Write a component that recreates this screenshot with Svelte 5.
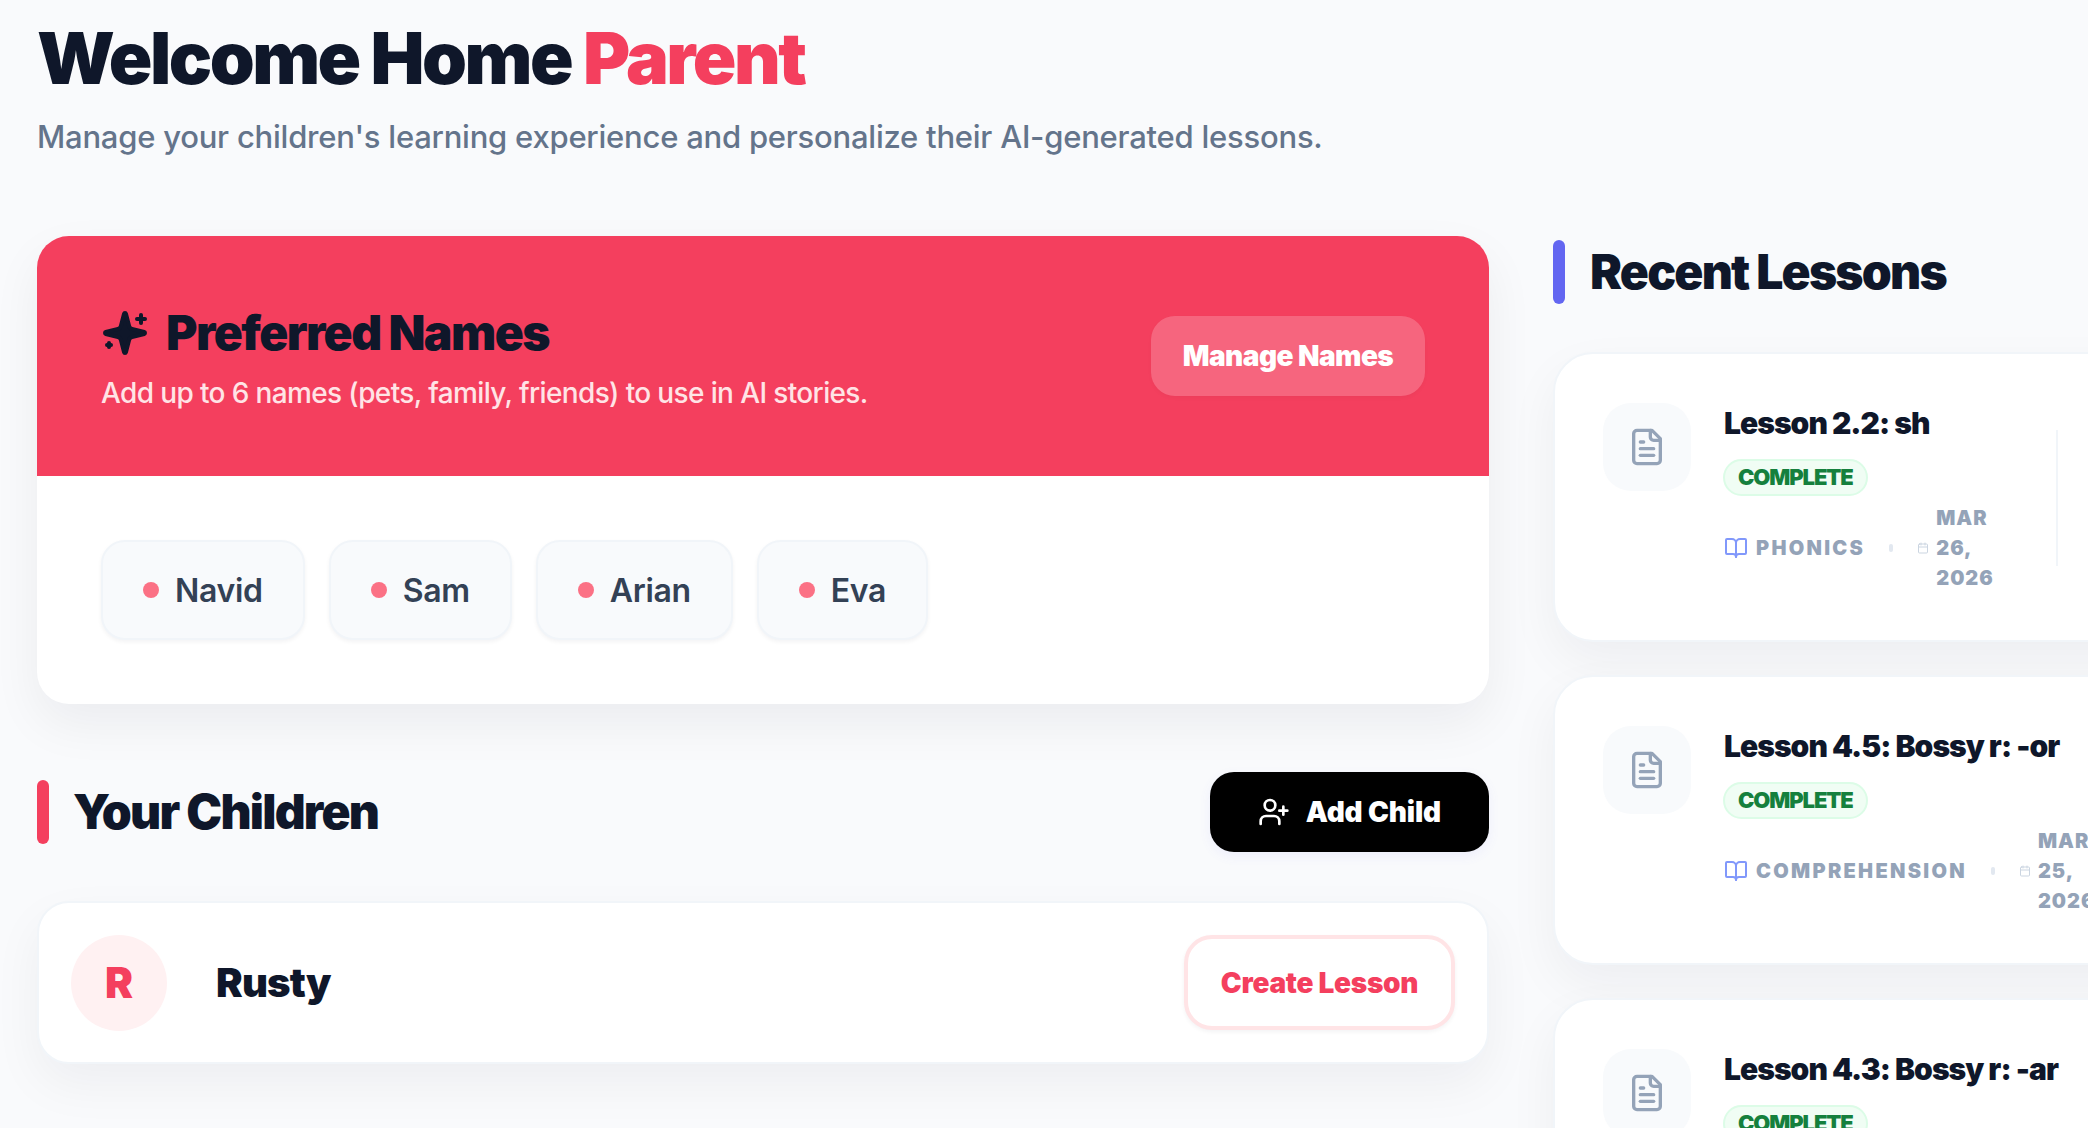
<script lang="ts">
  const names = ["Navid", "Sam", "Arian", "Eva"];

  const lessons = [
    { title: "Lesson 2.2: sh", subject: "Phonics", date: "Mar 26, 2026" },
    { title: "Lesson 4.5: Bossy r: -or", subject: "Comprehension", date: "Mar 25, 2026" },
    { title: "Lesson 4.3: Bossy r: -ar", subject: "Phonics", date: "Mar 25, 2026" },
  ];
</script>

<main class="page">
  <header class="page-head">
    <h1>Welcome Home <span class="accent">Parent</span></h1>
    <p>Manage your children's learning experience and personalize their AI-generated lessons.</p>
  </header>

  <div class="columns">
    <div class="left">
      <section class="names-card">
        <div class="names-head">
          <div class="names-text">
            <h2 class="names-title">
              <svg class="sparkles" viewBox="0 0 24 24" fill="currentColor" stroke="currentColor" stroke-width="2" stroke-linecap="round" stroke-linejoin="round">
                <path d="M9.937 15.5A2 2 0 0 0 8.5 14.063l-6.135-1.582a.5.5 0 0 1 0-.962L8.5 9.936A2 2 0 0 0 9.937 8.5l1.582-6.135a.5.5 0 0 1 .963 0L14.063 8.5A2 2 0 0 0 15.5 9.937l6.135 1.581a.5.5 0 0 1 0 .964L15.5 14.063a2 2 0 0 0-1.437 1.437l-1.582 6.135a.5.5 0 0 1-.963 0z"></path>
                <path d="M20 3v4"></path>
                <path d="M22 5h-4"></path>
                <path d="M4 17v2"></path>
                <path d="M5 18H3"></path>
              </svg>
              Preferred Names
            </h2>
            <p class="names-sub">Add up to 6 names (pets, family, friends) to use in AI stories.</p>
          </div>
          <button class="manage-btn">Manage Names</button>
        </div>
        <div class="names-body">
          {#each names as name}
            <div class="chip"><span class="dot"></span>{name}</div>
          {/each}
        </div>
      </section>

      <div class="section-head children-head">
        <h2 class="section-title"><span class="bar rose"></span>Your Children</h2>
        <button class="add-btn">
          <svg viewBox="0 0 24 24" fill="none" stroke="currentColor" stroke-width="2" stroke-linecap="round" stroke-linejoin="round">
            <path d="M16 21v-2a4 4 0 0 0-4-4H6a4 4 0 0 0-4 4v2"></path>
            <circle cx="9" cy="7" r="4"></circle>
            <path d="M19 8v6"></path>
            <path d="M22 11h-6"></path>
          </svg>
          Add Child
        </button>
      </div>

      <div class="child-card">
        <div class="avatar">R</div>
        <div class="child-name">Rusty</div>
        <button class="create-btn">Create Lesson</button>
      </div>
    </div>

    <aside class="right">
      <h2 class="section-title recent-title"><span class="bar indigo"></span>Recent Lessons</h2>
      <div class="lesson-list">
        {#each lessons as lesson}
          <article class="lesson-card">
            <div class="doc-box">
              <svg viewBox="0 0 24 24" fill="none" stroke="currentColor" stroke-width="2" stroke-linecap="round" stroke-linejoin="round">
                <path d="M15 2H6a2 2 0 0 0-2 2v16a2 2 0 0 0 2 2h12a2 2 0 0 0 2-2V7Z"></path>
                <path d="M14 2v4a2 2 0 0 0 2 2h4"></path>
                <path d="M10 9H8"></path>
                <path d="M16 13H8"></path>
                <path d="M16 17H8"></path>
              </svg>
            </div>
            <div class="lesson-body">
              <h3>{lesson.title}</h3>
              <span class="badge">Complete</span>
              <div class="meta">
                <svg class="book" viewBox="0 0 24 24" fill="none" stroke="currentColor" stroke-width="2" stroke-linecap="round" stroke-linejoin="round">
                  <path d="M12 7v14"></path>
                  <path d="M3 18a1 1 0 0 1-1-1V4a1 1 0 0 1 1-1h5a4 4 0 0 1 4 4 4 4 0 0 1 4-4h5a1 1 0 0 1 1 1v13a1 1 0 0 1-1 1h-6a3 3 0 0 0-3 3 3 3 0 0 0-3-3z"></path>
                </svg>
                <span class="subject">{lesson.subject}</span>
                <span class="meta-dot"></span>
                <svg class="cal" viewBox="0 0 24 24" fill="none" stroke="currentColor" stroke-width="2" stroke-linecap="round" stroke-linejoin="round">
                  <path d="M8 2v4"></path>
                  <path d="M16 2v4"></path>
                  <rect x="3" y="4" width="18" height="18" rx="2"></rect>
                  <path d="M3 10h18"></path>
                </svg>
                <span class="date">{lesson.date}</span>
              </div>
            </div>
            <div class="divider"></div>
          </article>
        {/each}
      </div>
    </aside>
  </div>
</main>

<style>
  :global(body) {
    margin: 0;
    background: #f9fafc;
    overflow: hidden;
  }

  .page {
    box-sizing: border-box;
    width: 2088px;
    height: 1128px;
    padding: 0 0 0 37px;
    overflow: hidden;
    font-family: Inter, "Liberation Sans", sans-serif;
    color: #0f172a;
  }

  .page-head h1 {
    margin: 0;
    padding-top: 18px;
    font-size: 72px;
    line-height: 80px;
    font-weight: 900;
    letter-spacing: -0.035em;
  }

  .accent {
    color: #f43f5e;
  }

  .page-head p {
    margin: 19px 0 0;
    font-size: 31px;
    line-height: 40px;
    font-weight: 500;
    letter-spacing: -0.0075em;
    color: #64748b;
  }

  .columns {
    display: flex;
    gap: 64px;
    margin-top: 79px;
    align-items: flex-start;
  }

  .left {
    flex: 0 0 1452px;
  }

  .right {
    flex: 0 0 800px;
    padding-top: 4px;
  }

  .names-card {
    background: #fff;
    border-radius: 32px;
    overflow: hidden;
    box-shadow: 0 20px 50px rgba(15, 23, 42, 0.06);
  }

  .names-head {
    display: flex;
    align-items: center;
    justify-content: space-between;
    height: 240px;
    box-sizing: border-box;
    padding: 0 64px;
    background: #f43f5e;
  }

  .names-text {
    padding-top: 4px;
  }

  .names-title {
    display: flex;
    align-items: center;
    gap: 17px;
    margin: 0;
    font-size: 48px;
    line-height: 60px;
    font-weight: 900;
    letter-spacing: -0.033em;
  }

  .sparkles {
    width: 48px;
    height: 48px;
  }

  .names-sub {
    margin: 10px 0 0;
    font-size: 28px;
    line-height: 40px;
    font-weight: 500;
    letter-spacing: -0.0225em;
    color: #ffe4e6;
  }

  .manage-btn {
    width: 274px;
    height: 80px;
    padding: 0;
    border: 0;
    border-radius: 24px;
    background: rgba(255, 255, 255, 0.2);
    color: #fff;
    font: inherit;
    font-size: 28px;
    font-weight: 900;
    letter-spacing: -0.02em;
    box-shadow: 0 2px 4px rgba(0, 0, 0, 0.03);
  }

  .names-body {
    display: flex;
    gap: 24px;
    padding: 64px;
  }

  .chip {
    display: flex;
    align-items: center;
    gap: 16px;
    box-sizing: border-box;
    height: 100px;
    padding: 0 40px;
    background: #f8fafc;
    border: 2px solid #f1f5f9;
    border-radius: 24px;
    font-size: 32px;
    font-weight: 600;
    letter-spacing: -0.01em;
    color: #334155;
    box-shadow: 0 2px 4px rgba(15, 23, 42, 0.05);
  }

  .dot {
    width: 16px;
    height: 16px;
    border-radius: 50%;
    background: #fb7185;
  }

  .section-head {
    display: flex;
    align-items: center;
    justify-content: space-between;
  }

  .children-head {
    margin-top: 68px;
  }

  .section-title {
    display: flex;
    align-items: center;
    gap: 24px;
    margin: 0;
    font-size: 48px;
    line-height: 64px;
    font-weight: 900;
    letter-spacing: -0.037em;
  }

  .recent-title {
    gap: 25px;
  }

  .bar {
    width: 12px;
    height: 64px;
    border-radius: 6px;
  }

  .rose {
    background: #f43f5e;
  }

  .indigo {
    background: #6366f1;
  }

  .add-btn {
    display: flex;
    align-items: center;
    gap: 16px;
    height: 80px;
    padding: 0 48px;
    border: 0;
    border-radius: 24px;
    background: #000;
    color: #fff;
    font: inherit;
    font-size: 28px;
    font-weight: 900;
    letter-spacing: -0.005em;
    box-shadow: 0 4px 12px rgba(99, 102, 241, 0.08);
  }

  .add-btn svg {
    width: 32px;
    height: 32px;
  }

  .child-card {
    display: flex;
    align-items: center;
    box-sizing: border-box;
    height: 163px;
    margin-top: 49px;
    padding: 0 32px;
    background: #fff;
    border: 2px solid #f1f5f9;
    border-radius: 32px;
    box-shadow: 0 20px 50px rgba(15, 23, 42, 0.05);
  }

  .avatar {
    display: flex;
    align-items: center;
    justify-content: center;
    width: 96px;
    height: 96px;
    border-radius: 50%;
    background: #fff1f2;
    color: #f43f5e;
    font-size: 42px;
    font-weight: 900;
  }

  .child-name {
    flex: 1;
    margin-left: 49px;
    font-size: 40px;
    font-weight: 900;
    letter-spacing: -0.02em;
  }

  .create-btn {
    box-sizing: border-box;
    width: 271px;
    height: 95px;
    padding: 0;
    background: #fff;
    border: 4px solid #ffe4e6;
    border-radius: 28px;
    color: #f43f5e;
    font: inherit;
    font-size: 28px;
    font-weight: 900;
    letter-spacing: -0.01em;
    box-shadow: 0 2px 4px rgba(15, 23, 42, 0.05);
  }

  .lesson-list {
    display: flex;
    flex-direction: column;
    gap: 33px;
    margin-top: 48px;
  }

  .lesson-card {
    display: flex;
    align-items: flex-start;
    box-sizing: border-box;
    height: 290px;
    padding: 49px 48px;
    background: #fff;
    border: 2px solid #f1f5f9;
    border-radius: 40px;
    box-shadow: 0 20px 50px rgba(15, 23, 42, 0.05);
  }

  .doc-box {
    display: flex;
    flex: none;
    align-items: center;
    justify-content: center;
    width: 88px;
    height: 88px;
    border-radius: 28px;
    background: #f8fafc;
    color: #94a3b8;
  }

  .doc-box svg {
    width: 40px;
    height: 40px;
  }

  .lesson-body {
    width: min-content;
    margin-left: 33px;
  }

  .lesson-body h3 {
    margin: 0;
    font-size: 30px;
    line-height: 40px;
    font-weight: 900;
    letter-spacing: -0.032em;
    white-space: nowrap;
  }

  .badge {
    display: inline-block;
    box-sizing: border-box;
    height: 37px;
    margin: 16px 0 0 -1px;
    padding: 0 13px;
    background: #f0fdf4;
    border: 2px solid #dcfce7;
    border-radius: 19px;
    color: #15803d;
    font-size: 22px;
    line-height: 33px;
    font-weight: 900;
    letter-spacing: -0.05em;
    text-transform: uppercase;
  }

  .meta {
    display: flex;
    align-items: center;
    margin-top: 7px;
    color: #94a3b8;
    font-size: 20px;
    line-height: 30px;
    font-weight: 900;
    letter-spacing: 0.115em;
    text-transform: uppercase;
  }

  .book {
    flex: none;
    width: 24px;
    height: 24px;
    color: #8198fb;
  }

  .subject {
    margin-left: 8px;
  }

  .meta-dot {
    flex: none;
    width: 4px;
    height: 8px;
    margin: 0 24px;
    border-radius: 2px;
    background: #e2e8f0;
  }

  .cal {
    flex: none;
    width: 12px;
    height: 12px;
    color: #cbd5e1;
  }

  .date {
    margin-left: 7px;
    letter-spacing: 0.05em;
  }

  .divider {
    flex: none;
    align-self: stretch;
    width: 2px;
    margin: 27px 0 25px 62px;
    background: #f1f5f9;
  }
</style>
